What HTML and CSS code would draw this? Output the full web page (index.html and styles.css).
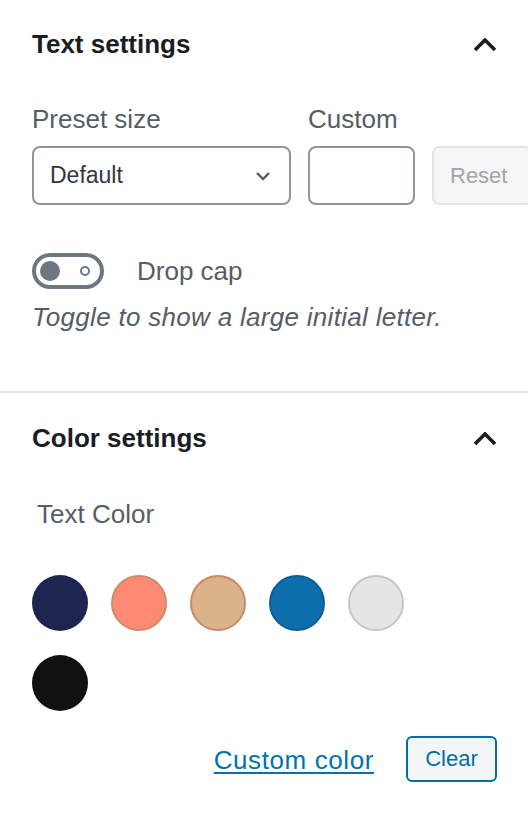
FILE: index.html
```html
<!DOCTYPE html>
<html lang="en">

<head>
    <meta charset="UTF-8">
    <meta name="viewport" content="width=device-width, initial-scale=1.0">
    <title>Block settings</title>
    <link rel="stylesheet" href="styles.css">
</head>

<body>
    <section class="panel">
        <div class="panel-head">
            <h2>Text settings</h2>
            <svg class="chevron-up" width="24" height="14" viewBox="0 0 24 14">
                <polyline points="2,12 12,2 22,12" fill="none" stroke="#191e23" stroke-width="3.6" />
            </svg>
        </div>

        <div class="size-row">
            <div class="field">
                <label class="label">Preset size</label>
                <div class="select">
                    <span>Default</span>
                    <svg width="16" height="10" viewBox="0 0 16 10">
                        <polyline points="2,2 8,8 14,2" fill="none" stroke="#555d66" stroke-width="2.4" />
                    </svg>
                </div>
            </div>
            <div class="field">
                <label class="label">Custom</label>
                <div class="input"></div>
            </div>
            <div class="field">
                <button class="reset">Reset</button>
            </div>
        </div>

        <div class="toggle-row">
            <span class="toggle">
                <span class="knob"></span>
                <span class="ring"></span>
            </span>
            <span class="label">Drop cap</span>
        </div>
        <p class="help">Toggle to show a large initial letter.</p>
    </section>

    <section class="panel color-panel">
        <div class="panel-head">
            <h2>Color settings</h2>
            <svg class="chevron-up" width="24" height="14" viewBox="0 0 24 14">
                <polyline points="2,12 12,2 22,12" fill="none" stroke="#191e23" stroke-width="3.6" />
            </svg>
        </div>

        <div class="label text-color">Text Color</div>

        <div class="swatches">
            <span class="swatch navy"></span>
            <span class="swatch salmon"></span>
            <span class="swatch tan"></span>
            <span class="swatch blue"></span>
            <span class="swatch light"></span>
            <span class="swatch black"></span>
        </div>

        <div class="color-actions">
            <a href="#" class="custom-link">Custom color</a>
            <button class="clear">Clear</button>
        </div>
    </section>
</body>

</html>
```

FILE: styles.css
```css
body {
    font-family: "Liberation Sans", Arial, sans-serif;
    background-color: #fff;
    margin: 0;
    padding: 0;
    overflow: hidden;
}

.panel {
    padding: 29px 31px 58px 32px;
    border-bottom: 2px solid #e2e4e7;
}

.color-panel {
    padding-top: 30px;
    border-bottom: none;
}

.panel-head {
    display: flex;
    justify-content: space-between;
    align-items: center;
}

.panel-head h2 {
    font-size: 26px;
    line-height: 31px;
    font-weight: bold;
    color: #191e23;
    margin: 0;
}

.chevron-up {
    margin-right: 0;
}

.label {
    font-size: 26px;
    line-height: 31px;
    color: #555d66;
}

.size-row {
    display: flex;
    gap: 17px;
    margin-top: 44px;
    margin-right: -40px;
}

.field {
    display: flex;
    flex-direction: column;
    justify-content: flex-end;
    gap: 11px;
}

.select {
    width: 259px;
    height: 59px;
    box-sizing: border-box;
    border: 2px solid #8d96a0;
    border-radius: 8px;
    display: flex;
    align-items: center;
    justify-content: space-between;
    padding: 0 18px 0 16px;
    font-size: 23px;
    color: #32373c;
}

.input {
    width: 107px;
    height: 59px;
    box-sizing: border-box;
    border: 2px solid #8d96a0;
    border-radius: 8px;
}

.reset {
    width: 100px;
    height: 59px;
    box-sizing: border-box;
    border: 2px solid #e2e4e7;
    border-radius: 7px;
    background-color: #f5f6f7;
    color: #a0a5aa;
    font-family: inherit;
    font-size: 22px;
    text-align: left;
    padding: 0 0 0 16px;
}

.toggle-row {
    display: flex;
    align-items: center;
    gap: 33px;
    margin-top: 48px;
}

.toggle {
    width: 72px;
    height: 36px;
    box-sizing: border-box;
    border: 4px solid #6c7781;
    border-radius: 18px;
    display: flex;
    align-items: center;
    justify-content: space-between;
    padding: 0 10px 0 4px;
}

.knob {
    width: 20px;
    height: 20px;
    border-radius: 50%;
    background-color: #6c7781;
}

.ring {
    width: 10px;
    height: 10px;
    box-sizing: border-box;
    border: 2px solid #6c7781;
    border-radius: 50%;
}

.help {
    font-size: 26px;
    line-height: 31px;
    font-style: italic;
    color: #555d66;
    margin: 13px 0 0 0;
    letter-spacing: 0.3px;
}

.text-color {
    margin-top: 45px;
    padding-left: 5px;
}

.swatches {
    display: grid;
    grid-template-columns: repeat(5, 56px);
    column-gap: 23px;
    row-gap: 24px;
    margin-top: 45px;
}

.swatch {
    width: 56px;
    height: 56px;
    border-radius: 50%;
    box-sizing: border-box;
}

.navy { background-color: #1e2550; }
.salmon { background-color: #ff8a73; border: 2px solid #cd8b6b; }
.tan { background-color: #dcb28a; border: 2px solid #c88a64; }
.blue { background-color: #0e6dad; border: 2px solid #0b5d94; }
.light { background-color: #e2e6e7; border: 2px solid #c3c6c7; }
.black { background-color: #111; }

.color-actions {
    display: flex;
    justify-content: flex-end;
    align-items: center;
    gap: 32px;
    margin-top: 25px;
}

.custom-link {
    font-size: 26px;
    color: #0073aa;
    letter-spacing: 0.6px;
    text-decoration: underline;
    text-underline-offset: 3px;
    margin-top: 2px;
}

.clear {
    width: 91px;
    height: 46px;
    box-sizing: border-box;
    border: 2px solid #0071a1;
    border-radius: 6px;
    background-color: #f3f5f6;
    color: #0071a1;
    font-family: inherit;
    font-size: 22px;
    padding: 0;
}
```
